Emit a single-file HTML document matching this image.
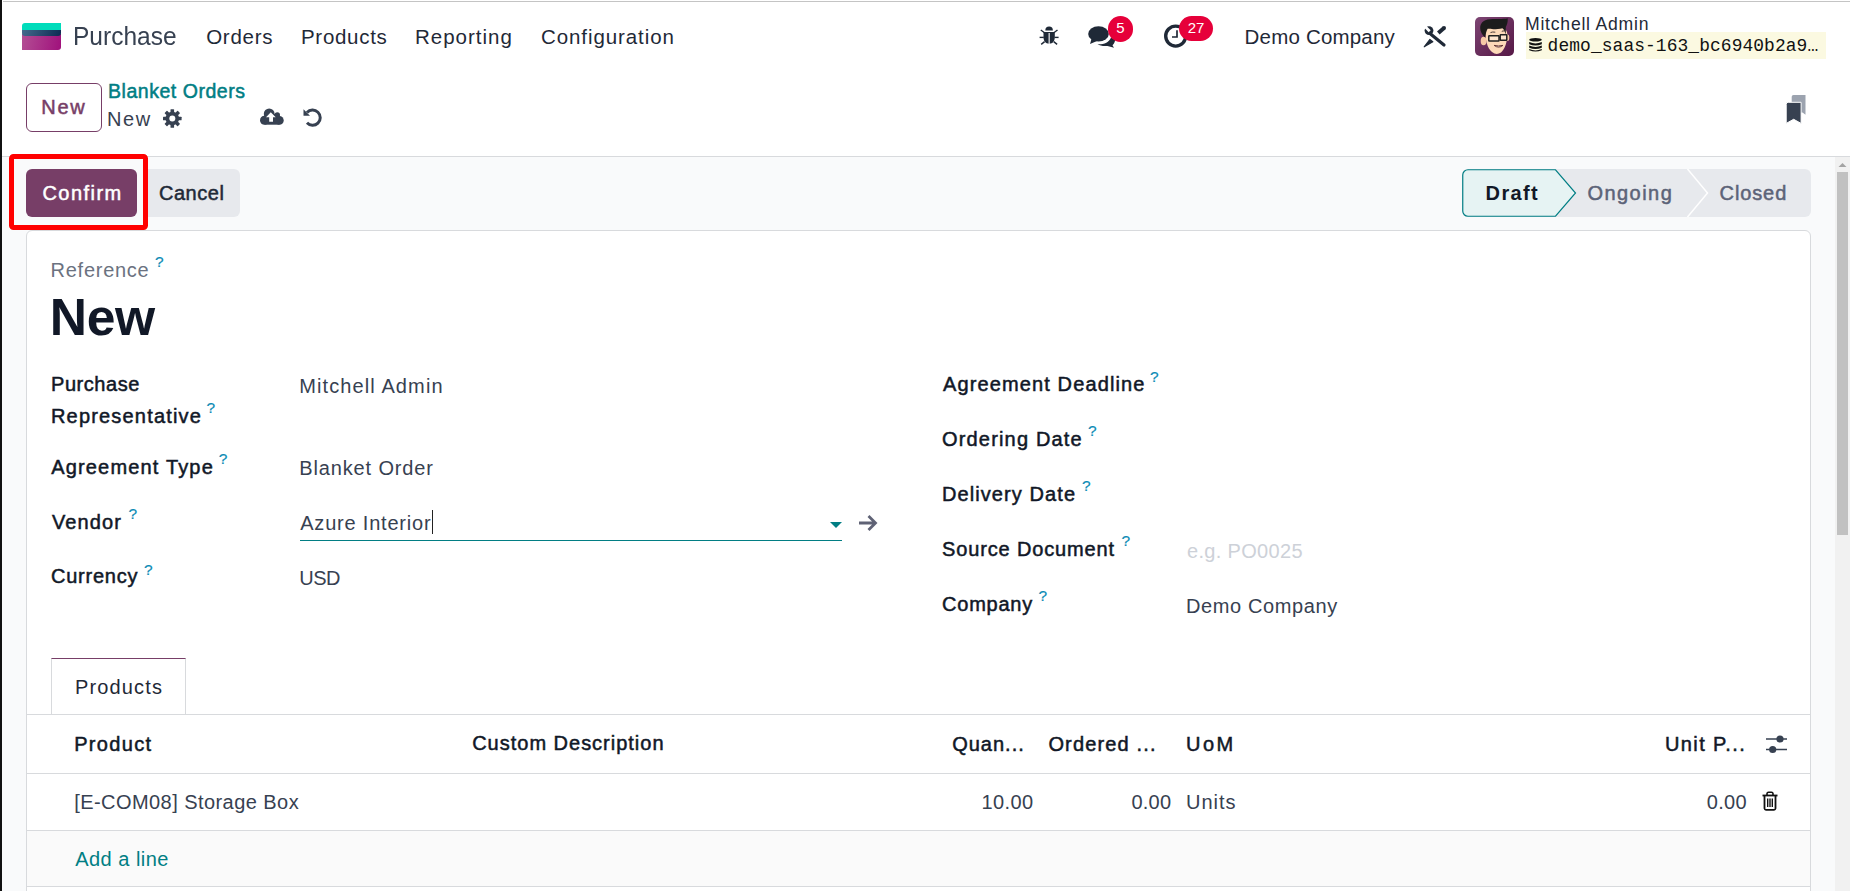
<!DOCTYPE html>
<html><head><meta charset="utf-8">
<style>
*{box-sizing:border-box;margin:0;padding:0}
html,body{width:1850px;height:891px;overflow:hidden;background:#fff;font-family:"Liberation Sans",sans-serif;color:#374151}
.a{position:absolute;white-space:nowrap;line-height:1}
.b{position:absolute}
#lb{position:absolute;left:0;top:0;width:2px;height:891px;background:#111}
#tl{position:absolute;left:3px;top:1px;width:1847px;height:1px;background:#c4c4c4}
.nav{font-size:20.5px;color:#1f2937}
.lbl{font-weight:normal;-webkit-text-stroke-width:0.5px;font-size:20px;color:#111827}
.val{font-size:20px;color:#374151}
.q{position:absolute;color:#0c8bb5;font-size:15.5px;font-weight:normal;-webkit-text-stroke-width:0.2px;font-style:normal;line-height:1;white-space:nowrap}
.th{font-weight:normal;-webkit-text-stroke-width:0.5px;font-size:20px;color:#111827}
</style></head><body>
<div id="lb"></div><div id="tl"></div>

<!-- NAVBAR -->
<div class="b" style="left:22px;top:23px;width:39px;height:27px;border-radius:3px 0 3px 0;overflow:hidden">
  <div class="b" style="left:0;top:0;width:39px;height:8px;background:#00dcbb"></div>
  <div class="b" style="left:0;top:11px;width:39px;height:16px;background:linear-gradient(100deg,#b34e94,#a0117c)"></div>
  <div class="b" style="left:0;top:6.6px;width:39px;height:6.3px;background:linear-gradient(110deg,#456a8c,#0d2a52);border-radius:0 0 3px 3px"></div>
</div>
<div class="a" style="letter-spacing:0px;left:72.5px;top:23px;font-size:26.5px;color:#374151;transform:scaleX(0.925);transform-origin:0 0">Purchase</div>
<div class="a nav" style="letter-spacing:0.72px;left:206.2px;top:27.2px">Orders</div>
<div class="a nav" style="letter-spacing:0.7px;left:301px;top:27.2px">Products</div>
<div class="a nav" style="letter-spacing:1px;left:415px;top:27.2px">Reporting</div>
<div class="a nav" style="letter-spacing:0.91px;left:541px;top:27.2px">Configuration</div>

<!-- bug -->
<svg class="b" style="left:1039px;top:26px" width="20" height="20" viewBox="0 0 20 20">
  <path d="M6.3 4.5 A3.8 4.1 0 0 1 13.9 4.5 Z" fill="#1f2937"/>
  <path d="M4.5 6 H15.8 V11 C15.8 15 13.8 17.7 10.2 17.7 C6.5 17.7 4.5 15 4.5 11 Z" fill="#1f2937"/>
  <rect x="9.6" y="7" width="1.1" height="11" fill="#fff"/>
  <g stroke="#1f2937" stroke-width="1.4" fill="none">
    <path d="M1.8 4 L5.5 6.8"/><path d="M18.5 4 L14.8 6.8"/>
    <path d="M0.6 11.4 H4.8"/><path d="M19.6 11.4 H15.5"/>
    <path d="M2.2 18.4 L5.6 15.6"/><path d="M18.1 18.4 L14.7 15.6"/>
  </g>
</svg>
<!-- chat -->
<svg class="b" style="left:1087px;top:25px" width="30" height="24" viewBox="0 0 30 24">
  <path d="M10.5 19.3 C17 19.6 22 17.5 24 12.5 L28 13 C28.5 16 27.5 18.5 25.5 20.2 L27 22.8 L20.5 20.9 C17 21.4 13 20.8 10.5 19.3 Z" fill="#1f2937"/>
  <ellipse cx="11.5" cy="8.9" rx="11.1" ry="8.4" fill="#fff"/>
  <ellipse cx="11.5" cy="8.9" rx="10.3" ry="7.7" fill="#1f2937"/>
  <path d="M4.5 14 L3 19 L10 16 Z" fill="#1f2937"/>
</svg>
<div class="b" style="left:1107.5px;top:16px;width:25.6px;height:25.6px;border-radius:13px;background:#e6003a;color:#fff;font-size:15px;line-height:24px;text-align:center">5</div>
<!-- clock -->
<svg class="b" style="left:1163px;top:24px" width="26" height="25" viewBox="0 0 26 25">
  <circle cx="12.7" cy="12.1" r="10" stroke="#1f2937" stroke-width="3.4" fill="none"/>
  <path d="M14 6.2 V13 H9" stroke="#1f2937" stroke-width="1.7" fill="none"/>
</svg>
<div class="b" style="left:1179px;top:16px;width:34px;height:25px;border-radius:13px;background:#e6003a;color:#fff;font-size:15px;line-height:23px;text-align:center">27</div>

<div class="a nav" style="letter-spacing:0.19px;left:1244.6px;top:26.6px">Demo Company</div>
<!-- tools -->
<svg class="b" style="left:1423px;top:25px" width="24" height="23" viewBox="0 0 24 23">
  <path d="M7.6 9 L21 20" stroke="#1f2937" stroke-width="3.2" stroke-linecap="round"/>
  <mask id="wm"><rect width="24" height="23" fill="#fff"/><rect x="-1.4" y="-6" width="2.8" height="7" fill="#000" transform="translate(6 5.6) rotate(-45)"/></mask>
  <circle cx="6" cy="5.6" r="4.4" fill="#1f2937" mask="url(#wm)"/>
  <path d="M15.3 7.9 L21 3" stroke="#1f2937" stroke-width="4" stroke-linecap="butt"/><circle cx="21" cy="3" r="2" fill="#1f2937"/>
  <path d="M1.2 21.8 L6.8 14.5 L9.8 16.8 Z" fill="#1f2937" stroke="#1f2937" stroke-width="1.2" stroke-linejoin="round"/>
</svg>
<!-- avatar -->
<div class="b" style="left:1475px;top:17px;width:39px;height:39px;border-radius:5px;background:linear-gradient(135deg,#7d4573,#561846);overflow:hidden">
  <svg width="39" height="39" viewBox="0 0 39 39">
    <ellipse cx="8.6" cy="24" rx="2.9" ry="4.3" fill="#f6c9a6"/>
    <ellipse cx="32.6" cy="20.8" rx="1.7" ry="3.2" fill="#f6c9a6"/>
    <path d="M10.4 13 C10.2 22 12 31 17 35 C20 37.4 23 37.5 26 35.5 C30 32 32.3 25 32.3 17 C32 12 29 10.5 21 10.5 C14 10.5 10.7 11 10.4 13 Z" fill="#fcd9b8"/>
    <path d="M5.2 11.2 C5 5 10 2 18 2 C24 2 29 2.3 32.7 1.3 C33 5 32 8 30.8 10 L30.8 17.6 C29.8 14.5 29 12.5 27.5 11.2 C22 12.5 16 12.2 12.6 11.8 C11.5 14 10.6 17 10.2 20.5 C7.2 18 5.3 14.5 5.2 11.2 Z" fill="#1c1c1c"/>
    <rect x="13.8" y="18.7" width="10.2" height="5.4" rx="0.5" fill="rgba(255,255,255,0.3)" stroke="#222" stroke-width="1.5"/>
    <rect x="25.2" y="17.8" width="6.6" height="5.4" rx="0.5" fill="rgba(255,255,255,0.3)" stroke="#222" stroke-width="1.5"/>
    <path d="M24 20.3 H25.2" stroke="#222" stroke-width="1.3"/>
    <path d="M15.5 15.6 Q17.5 14.6 20.3 15.2" stroke="#3a2a2a" stroke-width="0.9" fill="none"/>
    <path d="M26.8 14.4 Q28 13.7 29.5 14" stroke="#3a2a2a" stroke-width="0.9" fill="none"/>
    <path d="M19.2 28.4 Q23.5 31.8 27.9 28.4 Q23.5 29.6 19.2 28.4 Z" fill="#fff" stroke="#5a2a2a" stroke-width="0.9"/>
  </svg>
</div>
<div class="a" style="letter-spacing:0.77px;left:1525px;top:15.9px;font-size:17.6px;color:#1f2937">Mitchell Admin</div>
<div class="b" style="left:1526px;top:32px;width:300px;height:27px;background:#fbf9e1"></div>
<svg class="b" style="left:1529px;top:38px" width="13" height="14" viewBox="0 0 13 14">
  <ellipse cx="6.5" cy="1.8" rx="6.3" ry="1.8" fill="#111"/>
  <path d="M0.2 4 Q6.5 6.8 12.8 4 V6.2 Q6.5 9 0.2 6.2 Z" fill="#111"/>
  <path d="M0.2 7.5 Q6.5 10.3 12.8 7.5 V9.7 Q6.5 12.5 0.2 9.7 Z" fill="#111"/>
  <path d="M0.2 11 Q6.5 13.8 12.8 11 V12.2 Q6.5 15 0.2 12.2 Z" fill="#111"/>
</svg>
<div class="a" style="letter-spacing:0.09px;left:1547.6px;top:38.4px;font-family:'Liberation Mono',monospace;font-size:17.9px;color:#111">demo_saas-163_bc6940b2a9…</div>

<!-- CONTROL PANEL -->
<div class="b" style="left:26px;top:83px;width:76px;height:49px;border:1px solid #773e67;border-radius:6px"></div>
<div class="a" style="letter-spacing:1.8px;left:41.2px;top:97.4px;font-size:20px;font-weight:normal;-webkit-text-stroke-width:0.5px;color:#773e67">New</div>
<div class="a" style="letter-spacing:0.53px;left:108px;top:82.1px;font-size:19.5px;color:#017e84;font-weight:normal;-webkit-text-stroke-width:0.5px">Blanket Orders</div>
<div class="a" style="letter-spacing:1.6px;left:107px;top:108.9px;font-size:20px;color:#374151">New</div>
<!-- gear -->
<svg class="b" style="left:162px;top:109px" width="20" height="19" viewBox="0 0 20 19">
  <g transform="translate(10.3 9.5)" fill="#374151">
    <circle r="6.8"/>
    <rect x="-1.8" y="-9.3" width="3.6" height="18.6" rx="0.6"/>
    <rect x="-1.8" y="-9.3" width="3.6" height="18.6" rx="0.6" transform="rotate(45)"/>
    <rect x="-1.8" y="-9.3" width="3.6" height="18.6" rx="0.6" transform="rotate(90)"/>
    <rect x="-1.8" y="-9.3" width="3.6" height="18.6" rx="0.6" transform="rotate(135)"/>
  </g>
  <circle cx="10.3" cy="9.5" r="3" fill="#fff"/>
</svg>
<!-- cloud upload -->
<svg class="b" style="left:259px;top:108px" width="26" height="18" viewBox="0 0 26 18">
  <g fill="#374151"><circle cx="10.2" cy="5.9" r="5.4"/><circle cx="18.3" cy="6.9" r="2.7"/><circle cx="20.4" cy="12.4" r="4.3"/><circle cx="5.5" cy="12.2" r="4.5"/><rect x="5.5" y="7.5" width="15" height="9.2"/><rect x="12" y="6" width="6" height="4"/></g>
  <path d="M11.8 4.3 L7 9.2 H10.2 V13.8 H14 V9.2 H16.7 Z" fill="#fff"/>
</svg>
<!-- undo -->
<svg class="b" style="left:302px;top:108px" width="21" height="20" viewBox="0 0 21 20">
  <path d="M5 4.6 A7.6 7.6 0 1 1 5 14.8" stroke="#374151" stroke-width="3" fill="none"/>
  <path d="M1.5 1.3 V7.8 H8 Z" fill="#374151"/>
</svg>
<!-- bookmark -->
<svg class="b" style="left:1785px;top:94px" width="22" height="30" viewBox="0 0 22 30">
  <path d="M6.7 2.8 Q6.7 1 8.5 1 H20.5 V20.8 L17.5 18.6 H6.7 Z" fill="#9ca3af"/>
  <path d="M1.2 10.3 Q1.2 8.3 3.2 8.3 H16.1 V29.4 L8.65 25.3 L1.2 29.4 Z" fill="#374151" stroke="#fff" stroke-width="1"/>
</svg>

<!-- GRAY AREA -->
<div class="b" style="left:2px;top:156px;width:1848px;height:735px;background:#f9fafb;border-top:1px solid #d8dadd"></div>

<div class="b" style="left:26px;top:169px;width:111px;height:48px;background:#773e67;border-radius:6px"></div>
<div class="a" style="letter-spacing:1.46px;left:42.4px;top:182.5px;font-size:20px;font-weight:normal;-webkit-text-stroke-width:0.5px;color:#fff">Confirm</div>
<div class="b" style="left:144px;top:169px;width:96px;height:48px;background:#e7e9ed;border-radius:0 6px 6px 0"></div>
<div class="a" style="letter-spacing:0.52px;left:159px;top:182.5px;font-size:20px;font-weight:normal;-webkit-text-stroke-width:0.5px;color:#1f2937">Cancel</div>
<div class="b" style="left:9.4px;top:154.3px;width:138.3px;height:76px;border:5.2px solid #ff0000;border-radius:4.5px"></div>

<!-- status bar -->
<div class="b" style="left:1462px;top:169px;width:349px;height:48px;background:#e7e9ed;border-radius:6px"></div>
<svg class="b" style="left:1462px;top:169px" width="349" height="48" viewBox="0 0 349 48">
  <path d="M6 0.75 H93.5 L113.5 24 L93.5 47.25 H6 A5.25 5.25 0 0 1 0.75 42 V6 A5.25 5.25 0 0 1 6 0.75 Z" fill="#e6f3f3" stroke="#017e84" stroke-width="1.2"/>
  <path d="M225.5 0 L245.5 24 L225.5 48" stroke="#fff" stroke-width="1.5" fill="none"/>
</svg>
<div class="a" style="letter-spacing:1.35px;left:1485.6px;top:183.3px;font-size:20px;font-weight:bold;color:#111827">Draft</div>
<div class="a" style="letter-spacing:1.46px;left:1587.4px;top:183.3px;font-size:20px;font-weight:normal;-webkit-text-stroke-width:0.5px;color:#5c6378">Ongoing</div>
<div class="a" style="letter-spacing:0.88px;left:1719.6px;top:183.3px;font-size:20px;font-weight:normal;-webkit-text-stroke-width:0.5px;color:#5c6378">Closed</div>

<!-- scrollbar -->
<div class="b" style="left:1835px;top:157px;width:15px;height:734px;background:#f1f1f1"></div>
<div class="b" style="left:1837px;top:172px;width:11px;height:363px;background:#c1c1c1"></div>
<svg class="b" style="left:1835px;top:160px" width="15" height="10" viewBox="0 0 15 10"><path d="M3.5 7 L7.5 3 L11.5 7 Z" fill="#a3a3a3"/></svg>

<!-- SHEET -->
<div class="b" style="left:26px;top:230px;width:1785px;height:700px;background:#fff;border:1px solid #d8dadd;border-radius:6px"></div>

<div class="a" style="letter-spacing:0.73px;left:50.6px;top:259.8px;font-size:20px;color:#6b7280">Reference</div>
<div class="q" style="left:154.9px;top:253.6px">?</div>
<div class="a" style="letter-spacing:-0.4px;left:49.8px;top:291.8px;font-size:51.6px;font-weight:bold;color:#111827">New</div>

<!-- left group -->
<div class="a lbl" style="letter-spacing:0.56px;left:51px;top:373.7px">Purchase</div>
<div class="a lbl" style="letter-spacing:1.18px;left:51px;top:405.9px">Representative</div>
<div class="q" style="left:206.6px;top:400px">?</div>
<div class="a val" style="letter-spacing:1.11px;left:299.2px;top:375.6px">Mitchell Admin</div>

<div class="a lbl" style="letter-spacing:1.17px;left:51.2px;top:456.9px">Agreement Type</div>
<div class="q" style="left:218.8px;top:451.4px">?</div>
<div class="a val" style="letter-spacing:0.87px;left:299.2px;top:457.5px">Blanket Order</div>

<div class="a lbl" style="letter-spacing:1.12px;left:52px;top:511.8px">Vendor</div>
<div class="q" style="left:128.5px;top:506.2px">?</div>
<div class="a val" style="letter-spacing:0.8px;left:300.2px;top:513.2px">Azure Interior</div>
<div class="b" style="left:432px;top:510px;width:1px;height:24px;background:#222"></div>
<div class="b" style="left:300px;top:539.5px;width:542px;height:1.5px;background:#017e84"></div>
<svg class="b" style="left:829px;top:521px" width="14" height="8" viewBox="0 0 14 8"><path d="M1 1 H13 L7 7 Z" fill="#017e84"/></svg>
<svg class="b" style="left:857px;top:514px" width="22" height="18" viewBox="0 0 22 18"><path d="M2 9 H18 M11.5 2 L18.5 9 L11.5 16" stroke="#5f6275" stroke-width="2.8" fill="none"/></svg>

<div class="a lbl" style="letter-spacing:0.77px;left:51px;top:566.4px">Currency</div>
<div class="q" style="left:144px;top:561.6px">?</div>
<div class="a val" style="letter-spacing:-0.5px;left:299.2px;top:567.6px">USD</div>

<!-- right group -->
<div class="a lbl" style="letter-spacing:1.12px;left:943px;top:373.9px">Agreement Deadline</div>
<div class="q" style="left:1150px;top:368.5px">?</div>
<div class="a lbl" style="letter-spacing:1.17px;left:942px;top:428.9px">Ordering Date</div>
<div class="q" style="left:1088px;top:423px">?</div>
<div class="a lbl" style="letter-spacing:1.08px;left:942px;top:483.7px">Delivery Date</div>
<div class="q" style="left:1082px;top:478px">?</div>
<div class="a lbl" style="letter-spacing:0.86px;left:942px;top:538.8px">Source Document</div>
<div class="q" style="left:1121.6px;top:533px">?</div>
<div class="a val" style="letter-spacing:0.32px;left:1187px;top:541.3px;color:#cdd1d8">e.g. PO0025</div>
<div class="a lbl" style="letter-spacing:0.78px;left:942px;top:593.5px">Company</div>
<div class="q" style="left:1038.4px;top:588.4px">?</div>
<div class="a val" style="letter-spacing:0.62px;left:1186px;top:596.4px">Demo Company</div>

<!-- TABS -->
<div class="b" style="left:51px;top:658px;width:135px;height:57px;background:#fff;border:1px solid #d8dadd;border-top:1px solid #773e67;border-bottom:none"></div>
<div class="b" style="left:27px;top:714px;width:1783px;height:1px;background:#d8dadd"></div>
<div class="a val" style="letter-spacing:1.15px;left:75px;top:676.8px;color:#1f2937">Products</div>

<!-- TABLE -->
<div class="b" style="left:27px;top:772.5px;width:1783px;height:1px;background:#d8dadd"></div>
<div class="b" style="left:27px;top:830px;width:1783px;height:57px;background:#fafafa;border-top:1px solid #d8dadd;border-bottom:1px solid #d8dadd"></div>

<div class="a th" style="letter-spacing:1.34px;left:74.2px;top:734.1px">Product</div>
<div class="a th" style="letter-spacing:0.99px;left:472.2px;top:733.1px">Custom Description</div>
<div class="a th" style="letter-spacing:1px;left:952.2px;top:734.1px">Quan...</div>
<div class="a th" style="letter-spacing:1.16px;left:1048.4px;top:734.1px">Ordered ...</div>
<div class="a th" style="letter-spacing:2.5px;left:1186px;top:734.1px">UoM</div>
<div class="a th" style="letter-spacing:1.4px;left:1665px;top:733.7px">Unit P...</div>
<svg class="b" style="left:1765px;top:734px" width="23" height="20" viewBox="0 0 23 20">
  <path d="M1 5 H22 M1 15.5 H22" stroke="#374151" stroke-width="1.6"/>
  <circle cx="15" cy="5" r="3.6" fill="#374151"/>
  <circle cx="7.7" cy="15.5" r="3.6" fill="#374151"/>
</svg>

<div class="a val" style="letter-spacing:0.44px;left:74.2px;top:792px">[E-COM08] Storage Box</div>
<div class="a val" style="letter-spacing:0.4px;left:981.4px;top:791.6px">10.00</div>
<div class="a val" style="letter-spacing:0.26px;left:1131.4px;top:791.8px">0.00</div>
<div class="a val" style="letter-spacing:1px;left:1186px;top:791.6px">Units</div>
<div class="a val" style="letter-spacing:0.26px;left:1706.8px;top:791.8px">0.00</div>
<svg class="b" style="left:1761px;top:791px" width="18" height="20" viewBox="0 0 18 20">
  <path d="M1.5 4.5 H16.5" stroke="#111" stroke-width="1.8"/>
  <path d="M6 4.5 V2.5 A1.5 1.5 0 0 1 7.5 1.2 H10.5 A1.5 1.5 0 0 1 12 2.5 V4.5" stroke="#111" stroke-width="1.6" fill="none"/>
  <path d="M3.5 5 V17.5 A1.5 1.5 0 0 0 5 18.8 H13 A1.5 1.5 0 0 0 14.5 17.5 V5" stroke="#111" stroke-width="1.8" fill="none"/>
  <path d="M6.7 7.5 V16 M9 7.5 V16 M11.3 7.5 V16" stroke="#111" stroke-width="1.4"/>
</svg>

<div class="a val" style="letter-spacing:0.48px;left:75.2px;top:849px;color:#017e84">Add a line</div>

</body></html>
